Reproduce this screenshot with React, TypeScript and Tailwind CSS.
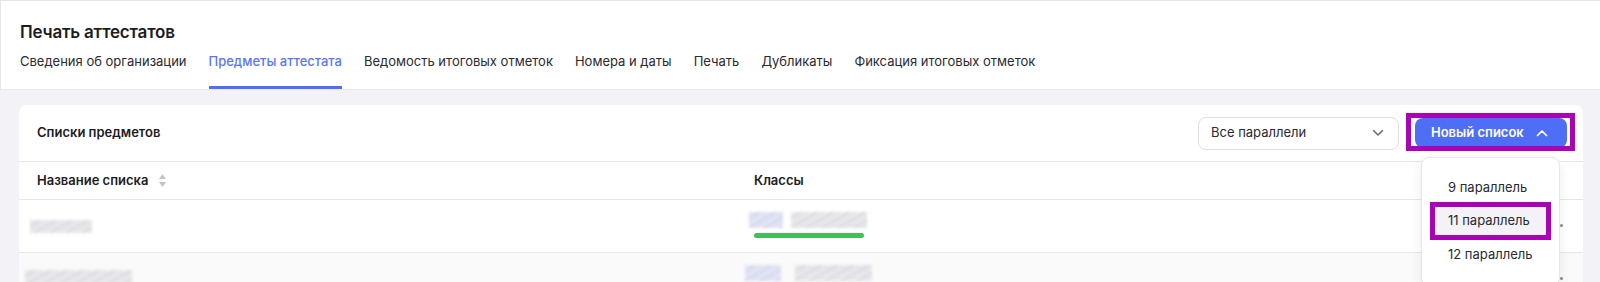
import React from "react";

const tabs = [
  "Сведения об организации",
  "Предметы аттестата",
  "Ведомость итоговых отметок",
  "Номера и даты",
  "Печать",
  "Дубликаты",
  "Фиксация итоговых отметок",
];

const Blur: React.FC<{ className: string }> = ({ className }) => (
  <div
    className={`blur-[1.5px] bg-[repeating-linear-gradient(150deg,#dcdce0_0px,#efeff2_3px,#d6d6db_5px,#f2f2f4_8px)] ${className}`}
  />
);

const SortIcon = () => (
  <svg width="9" height="15" viewBox="0 0 9 15" className="ml-[10px]">
    <path d="M4.5 1 L8 6 H1 Z" fill="#c3c3cf" />
    <path d="M4.5 14 L8 9 H1 Z" fill="#c3c3cf" />
  </svg>
);

const App: React.FC = () => {
  return (
    <div className="h-[282px] w-[1600px] overflow-hidden bg-[#f3f3f7] font-['Inter','Noto_Sans',sans-serif] text-[#1c1c22]">
      <header className="border-t border-l border-b border-[#e6e6ec] bg-white px-[19px] pt-[21px]">
        <h1 className="text-[17px] font-semibold leading-5 tracking-[-0.2px]">Печать аттестатов</h1>
        <nav className="mt-[6px] flex gap-[22px]">
          {tabs.map((t, i) => (
            <div
              key={t}
              className={`border-b-[3px] pt-[3px] pb-[15px] text-[13px] leading-5 ${
                i === 1 ? "border-[#4f6ef6] font-medium text-[#5a76f5]" : "border-transparent text-[#2a2a30]"
              }`}
            >
              {t}
            </div>
          ))}
        </nav>
      </header>

      <main className="pl-[19px] pr-[17px] pt-[15px]">
        <section className="relative rounded-t-lg bg-white">
          <div className="flex h-[57px] items-center justify-between border-b border-[#e6e6ec] pl-[18px] pr-[16px]">
            <h2 className="text-[13px] font-semibold">Списки предметов</h2>
            <div className="flex items-center gap-[16px]">
              <div className="flex h-[33px] w-[201px] items-center justify-between rounded-lg border border-[#dedee4] pl-[12px] pr-[14px] text-[13px] text-[#2a2a30]">
                <span>Все параллели</span>
                <svg width="12" height="8" viewBox="0 0 12 8" fill="none">
                  <path d="M1.5 1.5 L6 6 L10.5 1.5" stroke="#70707a" strokeWidth="1.6" strokeLinecap="round" strokeLinejoin="round" />
                </svg>
              </div>
              <div className="relative">
                <button className="flex h-[30px] w-[152px] items-center gap-[12px] rounded-lg bg-[#4f6ef6] pl-[16px] text-[13px] font-semibold text-white">
                  Новый список
                  <svg width="12" height="8" viewBox="0 0 12 8" fill="none">
                    <path d="M1.5 6.5 L6 2 L10.5 6.5" stroke="#ffffff" strokeWidth="1.7" strokeLinecap="round" strokeLinejoin="round" />
                  </svg>
                </button>
                <div className="pointer-events-none absolute top-[-5px] right-[-8px] bottom-[-3px] left-[-9px] border-[5px] border-[#a804b5]" />
              </div>
            </div>
          </div>

          <div className="grid h-[38px] grid-cols-[717px_1fr] items-center border-b border-[#e6e6ec] px-[18px] text-[13px] font-semibold">
            <div className="flex items-center">
              Название списка
              <SortIcon />
            </div>
            <div>Классы</div>
          </div>

          <div className="grid h-[53px] grid-cols-[717px_1fr] border-b border-[#e6e6ec] px-[18px]">
            <div className="pt-[20px]">
              <Blur className="ml-[-7px] h-[13px] w-[62px]" />
            </div>
            <div className="flex flex-col pt-[12px]">
              <div className="ml-[-5px] flex h-[16px] w-[118px] gap-[8px] blur-[1.5px]">
                <div className="h-full w-[34px] bg-[repeating-linear-gradient(150deg,#d3d5ee_0px,#ecedf8_3px,#ccd0ec_5px,#f0f0f8_8px)]" />
                <div className="h-full flex-1 bg-[repeating-linear-gradient(150deg,#dcdce0_0px,#efeff2_3px,#d6d6db_5px,#f2f2f4_8px)]" />
              </div>
              <div className="mt-[5px] h-[5px] w-[110px] rounded-full bg-[#3fbf55]" />
            </div>
          </div>

          <div className="grid h-[40px] grid-cols-[717px_1fr] bg-[#fafafa] px-[18px]">
            <div className="pt-[17px]">
              <Blur className="ml-[-12px] h-[14px] w-[107px]" />
            </div>
            <div className="pt-[12px]">
              <div className="ml-[-9px] flex h-[16px] w-[127px] gap-[14px] blur-[1.5px]">
                <div className="h-full w-[36px] bg-[repeating-linear-gradient(150deg,#d3d5ee_0px,#ecedf8_3px,#ccd0ec_5px,#f0f0f8_8px)]" />
                <div className="h-full flex-1 bg-[repeating-linear-gradient(150deg,#dcdce0_0px,#efeff2_3px,#d6d6db_5px,#f2f2f4_8px)]" />
              </div>
            </div>
          </div>

          <div className="absolute top-[119px] left-[1541px] h-[3px] w-[3px] rounded-full bg-[#8a8a94]" />
          <div className="absolute top-[172px] left-[1541px] h-[3px] w-[3px] rounded-full bg-[#8a8a94]" />

          <div className="absolute top-[52px] left-[1402px] w-[139px] rounded-lg border border-[#e6e6ec] bg-white pt-[13px] pb-[14px] shadow-[0_4px_12px_rgba(0,0,0,0.08)]">
            <div className="flex h-[33px] items-center px-[26px] text-[13px] text-[#2a2a30]">9 параллель</div>
            <div className="relative mx-[13px] my-[3px] flex h-[28px] items-center bg-[#f2f2f7] px-[13px] text-[13px] text-[#2a2a30]">
              11 параллель
              <div className="pointer-events-none absolute top-[-5px] right-[-5px] bottom-[-5px] left-[-5px] border-[5px] border-[#a804b5]" />
            </div>
            <div className="flex h-[33px] items-center px-[26px] text-[13px] text-[#2a2a30]">12 параллель</div>
          </div>
        </section>
      </main>
    </div>
  );
};

export default App;
